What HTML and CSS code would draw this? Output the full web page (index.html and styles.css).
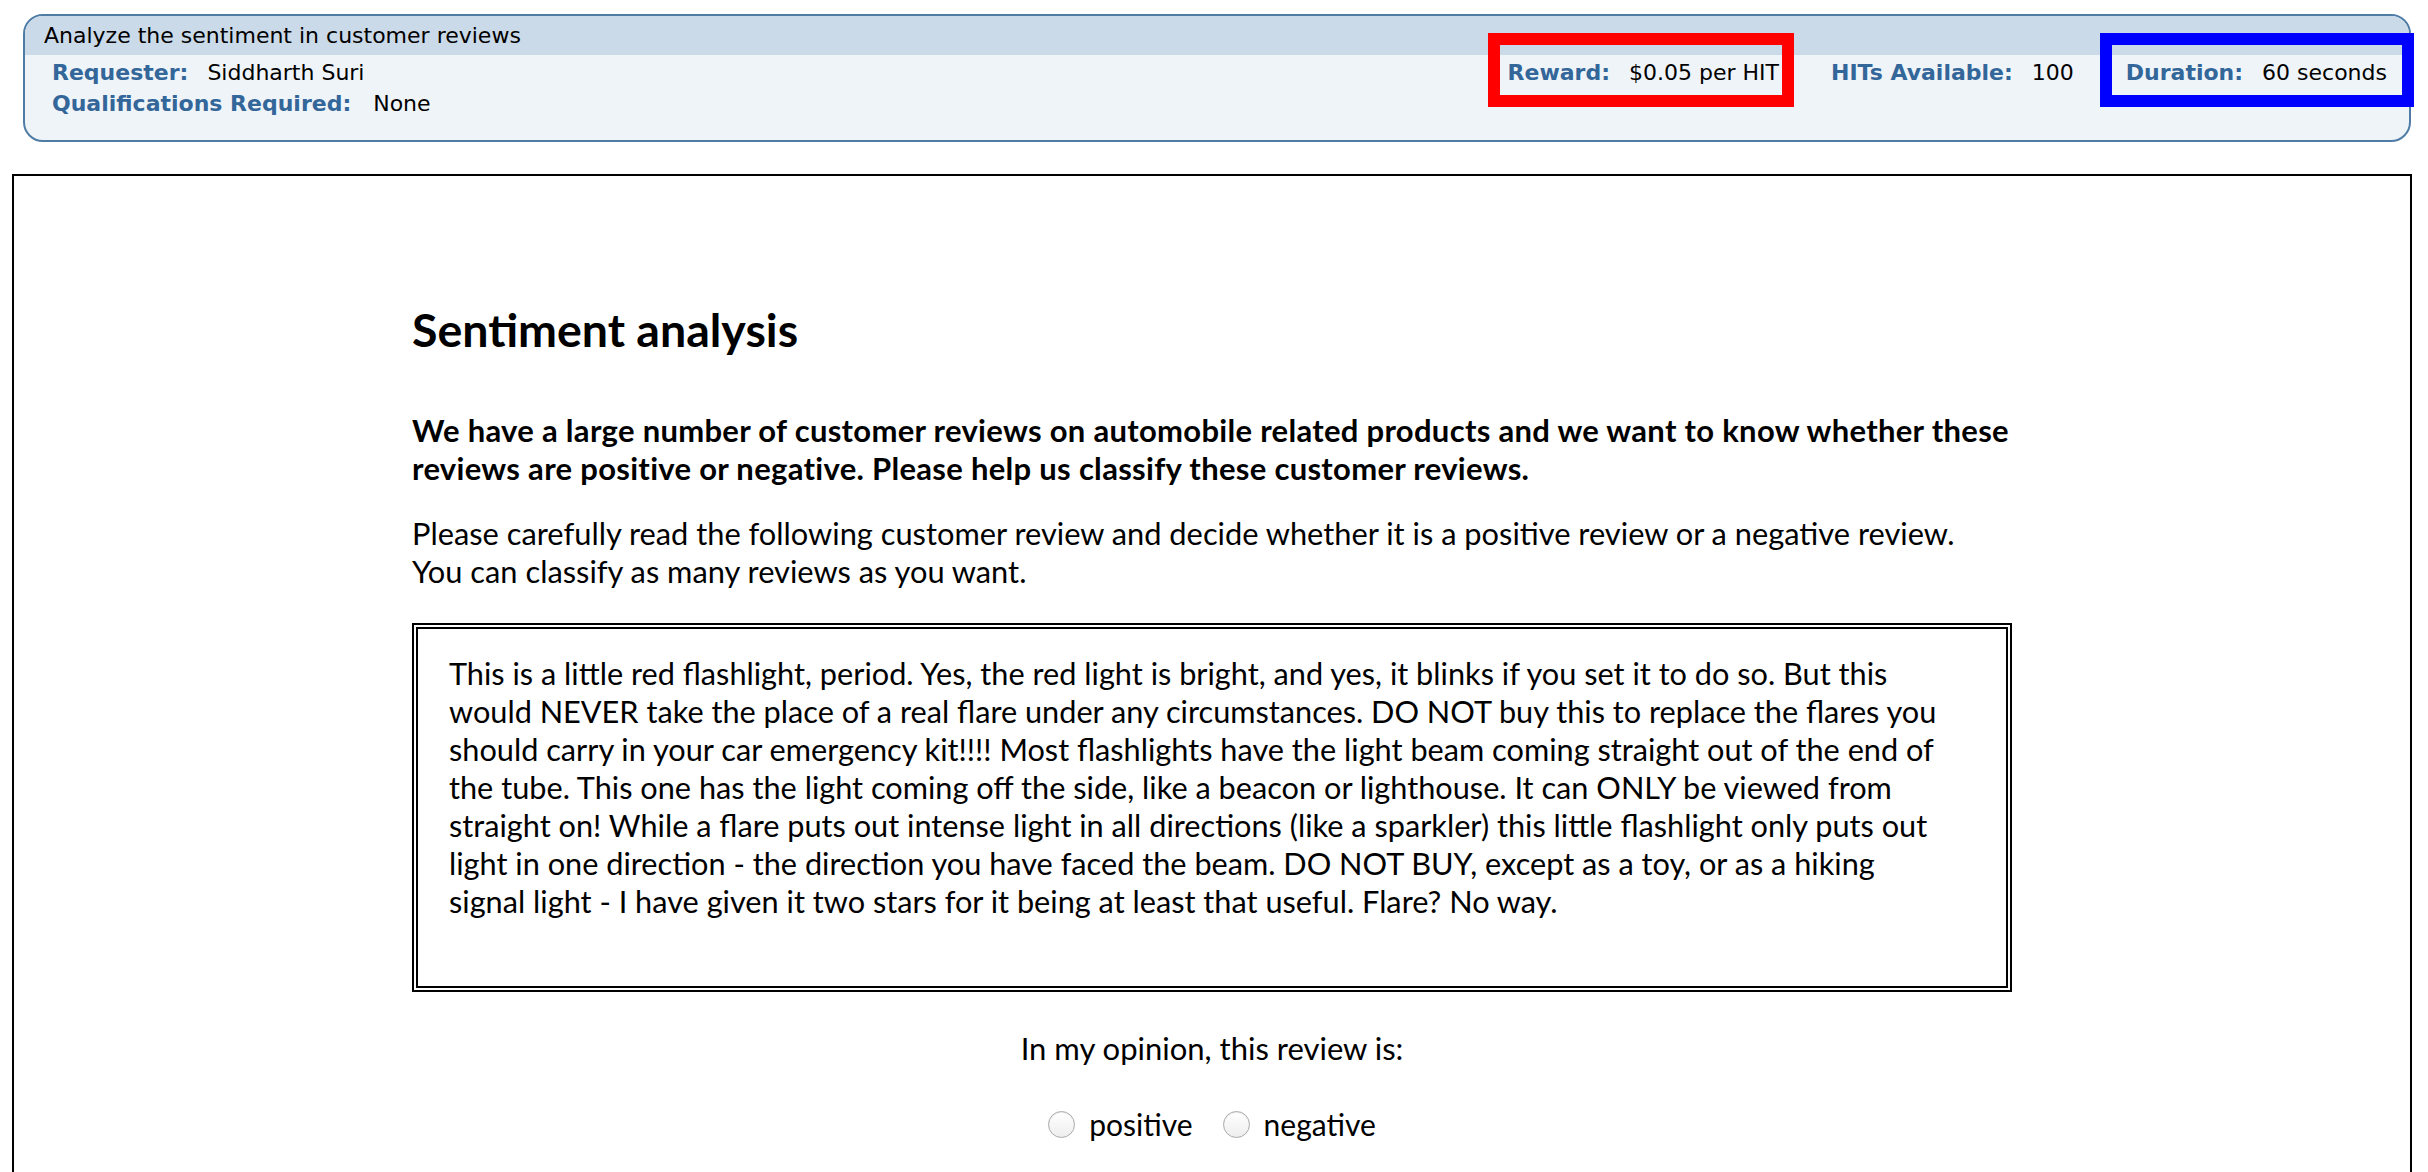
FILE: index.html
```html
<!DOCTYPE html>
<html lang="en">
<head>
<meta charset="utf-8">
<title>Analyze the sentiment in customer reviews</title>
<link rel="stylesheet" href="styles.css">
</head>
<body>
<div class="page">
  <div class="hit">
    <div class="hit-title">Analyze the sentiment in customer reviews</div>
    <div class="hit-body">
      <div class="hit-left">
        <div class="field"><span class="lbl">Requester:</span><span class="val">Siddharth Suri</span></div>
        <div class="field"><span class="lbl lbl-wide">Qualifications Required:</span><span class="val">None</span></div>
      </div>
      <div class="hit-right">
        <div class="field mark mark-red"><span class="lbl">Reward:</span><span class="val">$0.05 per HIT</span></div>
        <div class="field"><span class="lbl">HITs Available:</span><span class="val">100</span></div>
        <div class="field mark mark-blue"><span class="lbl">Duration:</span><span class="val">60 seconds</span></div>
      </div>
    </div>
  </div>

  <div class="frame">
    <div class="content">
      <h1 class="title">Sentiment analysis</h1>
      <p class="lead">We have a large number of customer reviews on automobile related products and we want to know whether these<br>reviews are positive or negative. Please help us classify these customer reviews.</p>
      <p class="intro">Please carefully read the following customer review and decide whether it is a positive review or a negative review.<br>You can classify as many reviews as you want.</p>
      <div class="review">This is a little red flashlight, period. Yes, the red light is bright, and yes, it blinks if you set it to do so. But this<br>would NEVER take the place of a real flare under any circumstances. DO NOT buy this to replace the flares you<br>should carry in your car emergency kit!!!! Most flashlights have the light beam coming straight out of the end of<br>the tube. This one has the light coming off the side, like a beacon or lighthouse. It can ONLY be viewed from<br>straight on! While a flare puts out intense light in all directions (like a sparkler) this little flashlight only puts out<br>light in one direction - the direction you have faced the beam. DO NOT BUY, except as a toy, or as a hiking<br>signal light - I have given it two stars for it being at least that useful. Flare? No way.</div>
      <p class="question">In my opinion, this review is:</p>
      <div class="choices">
        <label class="choice"><input type="radio" name="sentiment" value="positive"><span>positive</span></label>
        <label class="choice"><input type="radio" name="sentiment" value="negative"><span>negative</span></label>
      </div>
    </div>
  </div>
</div>
</body>
</html>
```

FILE: styles.css
```css
html, body {
  margin: 0;
  padding: 0;
  background: #ffffff;
}

body {
  font-family: "DejaVu Sans", Verdana, sans-serif;
  color: #000;
  overflow: hidden;
}

.page {
  padding-top: 14px;
}

/* ---------- HIT summary box ---------- */
.hit {
  margin: 0 17px 0 23px;
  border: 2px solid #4f7ca5;
  border-radius: 20px;
  background: #eff4f9;
}

.hit-title {
  height: 39px;
  line-height: 39px;
  padding-left: 19px;
  font-size: 22px;
  background: #cbdae8;
  border-radius: 18px 18px 0 0;
}

.hit-body {
  display: flex;
  justify-content: space-between;
  padding: 2px 22px 21px 27px;
  font-size: 22px;
  line-height: 31px;
}

.hit-right {
  display: flex;
  gap: 52px;
  align-self: flex-start;
}

.field {
  position: relative;
  white-space: nowrap;
}

.lbl {
  font-weight: bold;
  color: #336699;
  margin-right: 19px;
}

.lbl-wide {
  margin-right: 22px;
}

.mark::after {
  content: "";
  position: absolute;
  top: -24px;
  bottom: -19px;
  border: 12px solid #ff0000;
  pointer-events: none;
}

.mark-red::after {
  left: -20px;
  right: -15px;
  border-color: #ff0000;
}

.mark-blue::after {
  left: -26px;
  right: -27px;
  border-color: #0000ff;
}

/* ---------- task frame ---------- */
.frame {
  margin: 32px 16px 0 12px;
  border: 2px solid #000;
  height: 1100px;
}

.content {
  width: 1600px;
  margin: 0 auto;
  padding-top: 125px;
  font-family: Lato, "Open Sans", sans-serif;
  font-size: 30px;
  line-height: 38px;
}

.title {
  margin: 0 0 54px;
  font-size: 46.5px;
  line-height: 56px;
  font-weight: bold;
}

.lead {
  margin: 0 0 28px;
  font-size: 31px;
  letter-spacing: 0.3px;
  font-weight: bold;
  white-space: nowrap;
}

.intro {
  margin: 0 0 32px;
  font-size: 30.8px;
  white-space: nowrap;
}

.review {
  border: 6px double #000;
  padding: 26px 31px 65px;
  font-size: 30.7px;
  white-space: nowrap;
}

.question {
  margin: 37px 0 38px;
  font-size: 31px;
  text-align: center;
}

.choices {
  display: flex;
  justify-content: center;
  align-items: center;
  gap: 30px;
}

.choice {
  display: flex;
  align-items: center;
  gap: 14px;
}

.choice input {
  appearance: none;
  -webkit-appearance: none;
  width: 27px;
  height: 27px;
  margin: 0;
  border: 1px solid #a9a9a9;
  border-radius: 50%;
  background: linear-gradient(#ffffff, #eeeeee);
  box-shadow: inset 0 1px 1px rgba(0, 0, 0, 0.08);
}
```
